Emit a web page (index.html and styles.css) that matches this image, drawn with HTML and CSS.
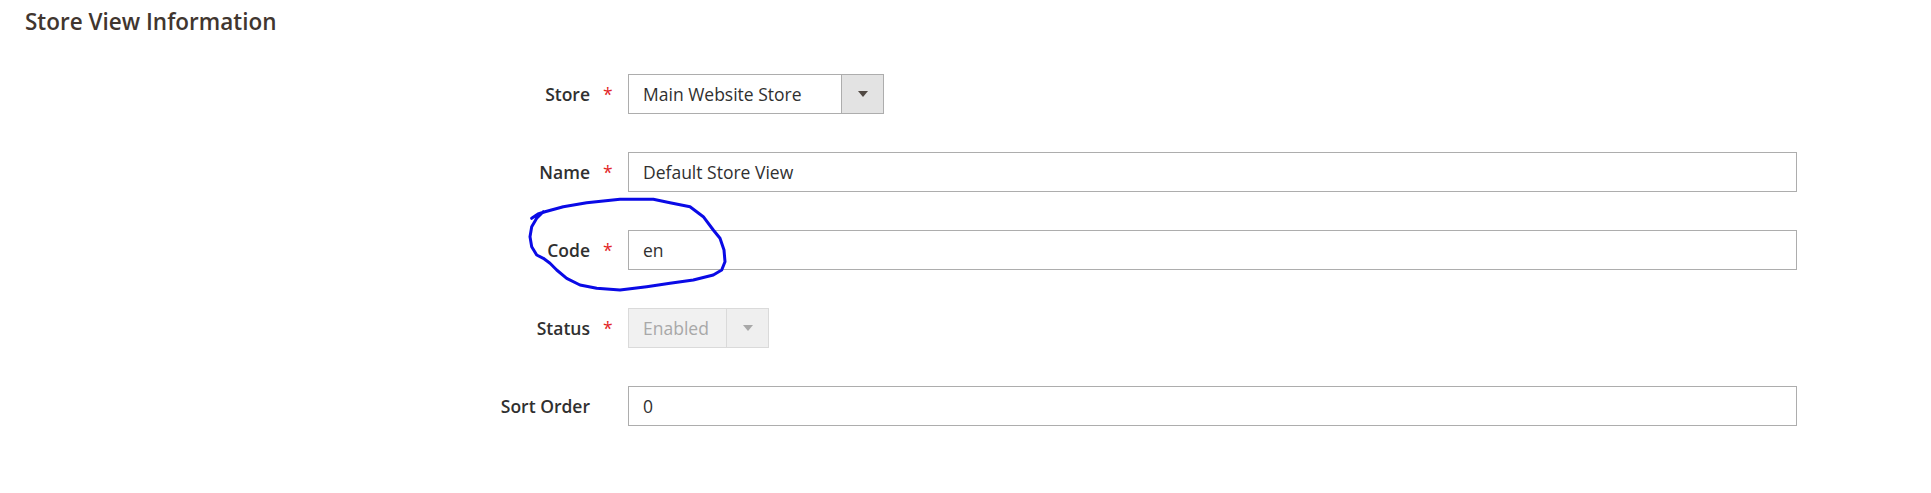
FILE: index.html
```html
<!DOCTYPE html>
<html lang="en">
<head>
<meta charset="utf-8">
<title>Store View Information</title>
<link rel="stylesheet" href="styles.css">
</head>
<body>
<div class="page">
  <h2 class="legend">Store View Information</h2>
  <div class="form">
    <div class="row">
      <label class="label">Store</label>
      <span class="req">*</span>
      <div class="select select-store">
        <span class="value">Main Website Store</span>
        <span class="btn"><span class="arrow"></span></span>
      </div>
    </div>
    <div class="row">
      <label class="label">Name</label>
      <span class="req">*</span>
      <div class="input"><span class="value">Default Store View</span></div>
    </div>
    <div class="row">
      <label class="label">Code</label>
      <span class="req">*</span>
      <div class="input"><span class="value">en</span></div>
    </div>
    <div class="row">
      <label class="label">Status</label>
      <span class="req">*</span>
      <div class="select select-status disabled">
        <span class="value">Enabled</span>
        <span class="btn"><span class="arrow"></span></span>
      </div>
    </div>
    <div class="row">
      <label class="label">Sort Order</label>
      <span class="req"></span>
      <div class="input"><span class="value">0</span></div>
    </div>
  </div>
  <svg class="annotation" width="1931" height="493" viewBox="0 0 1931 493" aria-hidden="true">
    <polyline points="531.7,218.3 538,214 545,211.7 563.3,206.7 586.7,202.7 620,199.3 653.3,199.3 670,202.7 690,206.7 703.3,216.7 713.3,230 720,238.3 724,250 725,261.7 721.7,270 713.3,275 693.3,280 670,283.3 646.7,286.7 620,290 596.7,288.3 580,285 566.7,278.3 556.7,270 550,263.3 543.3,258.3 536.7,255 531.7,246.7 530,236.7 531.7,226.7 536.7,218.3 543.3,211.7" />
  </svg>
</div>
</body>
</html>
```
FILE: styles.css
```css
html, body {
  margin: 0;
  padding: 0;
  background: #ffffff;
}
.page {
  position: relative;
  width: 1931px;
  height: 493px;
  font-family: "Open Sans", "Liberation Sans", sans-serif;
  color: #303030;
}
.legend {
  margin: 0;
  padding: 7px 0 0 25px;
  font-size: 22.5px;
  line-height: 30px;
  font-weight: 600;
  color: #41362f;
}
.form {
  display: flex;
  flex-direction: column;
  gap: 38px;
  padding-top: 37px;
}
.row {
  display: grid;
  grid-template-columns: 590px 38px 1169px;
  align-items: center;
  height: 40px;
}
.label {
  text-align: right;
  font-size: 17.5px;
  font-weight: 600;
  color: #303030;
}
.req {
  color: #e22626;
  font-size: 17.5px;
  padding-left: 13px;
  line-height: 1;
  position: relative;
  top: 1px;
}
.input, .select {
  box-sizing: border-box;
  height: 40px;
  border: 1px solid #adadad;
  background: #ffffff;
  display: flex;
  align-items: center;
  font-size: 17.5px;
  color: #303030;
}
.value {
  padding-left: 14px;
  flex: 1;
}
.select-store {
  width: 256px;
}
.select-status {
  width: 141px;
}
.btn {
  width: 41px;
  align-self: stretch;
  background: #e3e3e3;
  border-left: 1px solid #adadad;
  display: flex;
  align-items: center;
  justify-content: center;
}
.arrow {
  width: 0;
  height: 0;
  border-left: 5px solid transparent;
  border-right: 5px solid transparent;
  border-top: 6px solid #514943;
}
.disabled {
  background: #f1f1f1;
  border-color: #dadada;
}
.disabled .value {
  color: #a8a8a8;
}
.disabled .btn {
  background: #efefef;
  border-left-color: #dadada;
}
.disabled .arrow {
  border-top-color: #a8a8a8;
}
.annotation {
  position: absolute;
  left: 0;
  top: 0;
  pointer-events: none;
}
.annotation polyline {
  fill: none;
  stroke: #0a0ae6;
  stroke-width: 3;
  stroke-linejoin: round;
  stroke-linecap: round;
}
```
